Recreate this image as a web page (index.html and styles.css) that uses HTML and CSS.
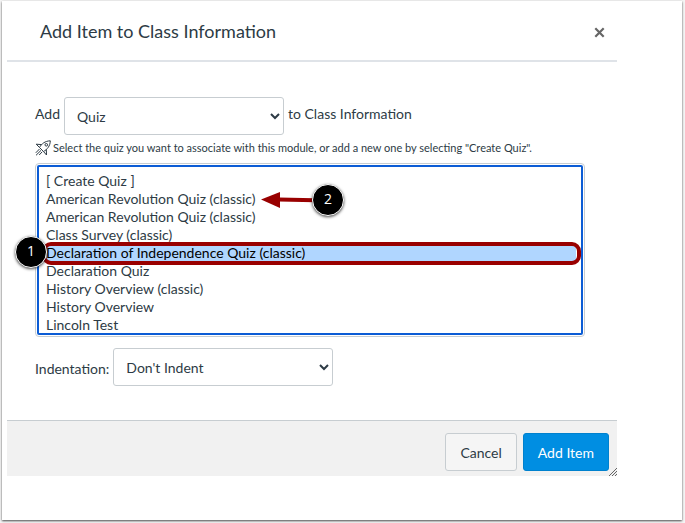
FILE: index.html
```html
<!DOCTYPE html>
<html lang="en">
<head>
<meta charset="UTF-8">
<meta name="viewport" content="width=device-width, initial-scale=1.0">
<title>Add Item to Class Information</title>

<link rel="stylesheet" href="styles.css">
</head>
<body>

<div class="page">
    <form class="dialog">

        <header class="dialog-header">
            <h1>Add Item to Class Information</h1>
            <button type="button" class="close" aria-label="Close">
                <svg width="11" height="11" viewBox="0 0 11 11">
                    <path d="M1.3 1.3L9.7 9.7M9.7 1.3L1.3 9.7" stroke="#666" stroke-width="2.2"/>
                </svg>
            </button>
        </header>

        <div class="dialog-body">

            <div class="row row-type">
                <label for="itemType" class="row-text">Add</label>
                <select id="itemType" class="dropdown">
                    <option>Assignment</option>
                    <option selected>Quiz</option>
                    <option>File</option>
                    <option>Page</option>
                </select>
                <span class="row-text">to Class Information</span>
            </div>

            <label class="hint" for="quizList">
                <svg class="rocket" width="16" height="16" viewBox="0 0 16 16">
                    <path d="M4.500 7.500C6.500 3.800 10 1 15.300 .8C15.200 6 12.200 9.500 8.500 11.500Z"/>
                    <path d="M6.500 4.600L1.200 4.200L4.500 7.500M11.300 9.500L11.500 15L8.500 11.500"/>
                    <circle cx="11.300" cy="4.800" r="1.300"/>
                    <path d="M4.500 9L.8 12.800M6 10.400L1 15.300M7.200 11.800L4.200 15"/>
                </svg>
                <span>Select the quiz you want to associate with this module, or add a new one by selecting "Create Quiz".</span>
            </label>

            <div class="list-wrap">
                <select id="quizList" class="quiz-list" size="9">
                    <option>[ Create Quiz ]</option>
                    <option>American Revolution Quiz (classic)</option>
                    <option>American Revolution Quiz (classic)</option>
                    <option>Class Survey (classic)</option>
                    <option selected>Declaration of Independence Quiz (classic)</option>
                    <option>Declaration Quiz</option>
                    <option>History Overview (classic)</option>
                    <option>History Overview</option>
                    <option>Lincoln Test</option>
                </select>

                <!-- callouts over the list -->
                <div class="highlight"></div>
                <span class="badge badge-one">1</span>
                <svg class="arrow" width="54" height="16" viewBox="0 0 54 16">
                    <path d="M0 7.500L19 0V16Z" fill="#990000"/>
                    <path d="M18 7.500L54 8.300" stroke="#990000" stroke-width="4"/>
                </svg>
                <span class="badge badge-two">2</span>
            </div>

            <div class="row row-indent">
                <label for="indent" class="row-text">Indentation:</label>
                <select id="indent" class="dropdown">
                    <option selected>Don't Indent</option>
                    <option>Indent 1 Level</option>
                    <option>Indent 2 Levels</option>
                </select>
            </div>

        </div>

        <footer class="dialog-footer">
            <button type="button" class="btn">Cancel</button>
            <button type="submit" class="btn btn-primary">Add Item</button>
            <svg class="grip" width="8" height="8" viewBox="0 0 8 8">
                <path d="M0 8L8 0M3 8L8 3M6 8L8 6" stroke="#666"/>
            </svg>
        </footer>

    </form>
</div>

</body>
</html>
```

FILE: styles.css
```css
*{
    margin:0;
    padding:0;
    box-sizing:border-box;
    font-family:Lato,"Liberation Sans",sans-serif;
}

body{
    background:#f4f4f4;
    color:#2d3b45;
    font-size:14px;
    line-height:18px;
    padding:1px 3px 3px 2px;
}

.page{
    background:white;
    min-height:calc(100vh - 4px);
    padding:0 5px;
    box-shadow:0 1px 2px rgba(0,0,0,.7);
}

.dialog{
    max-width:610px;
}

.dialog-header{
    display:flex;
    align-items:center;
    justify-content:space-between;
    padding:20px 12px 19px 33px;
    border-bottom:2px solid #dfe3e8;
}

h1{
    font-size:18px;
    font-weight:normal;
    line-height:20px;
}

.close{
    display:flex;
    padding-top:2px;
    border:none;
    background:none;
    cursor:pointer;
}

.dialog-body{
    padding:35px 32px 34px 28px;
}

.row{
    display:flex;
    gap:4px;
}

.row-text{
    padding:8px 0;
}

.row-type{
    align-items:flex-start;
}

.row-indent{
    align-items:flex-end;
}

.dropdown{
    width:220px;
    height:38px;
    padding:0 8px;
    border:1px solid #c7cdd1;
    border-radius:3px;
    background:white;
    color:#2d3b45;
    font-size:14px;
}

.hint{
    display:flex;
    align-items:center;
    gap:2px;
    margin:4px 0 6px;
    font-size:11px;
}

.rocket{
    fill:none;
    stroke:#2d3b45;
    stroke-width:1;
}

.list-wrap{
    position:relative;
    margin-bottom:11px;
}

.quiz-list{
    display:block;
    width:100%;
    padding:8px 8px 2px;
    border:1px solid #c7cdd1;
    border-radius:4px;
    outline:2px solid #0b5cd5;
    outline-offset:-4px;
    background:white;
    color:#2d3b45;
    font-size:14px;
    overflow:hidden;
}

.quiz-list option{
    height:18px;
    min-height:18px;
    padding:0 2px;
    line-height:18px;
}

.quiz-list option:checked{
    background:#b0d6ff linear-gradient(#b0d6ff,#b0d6ff);
    color:black;
}

.highlight{
    position:absolute;
    top:79px;
    left:7px;
    right:4px;
    height:23px;
    border:4px solid #990000;
    border-radius:9px;
}

.badge{
    position:absolute;
    width:32px;
    height:32px;
    border:1px solid white;
    border-radius:50%;
    background:black;
    color:white;
    font-family:"Open Sans",sans-serif;
    font-size:14px;
    line-height:28px;
    text-align:center;
    box-shadow:0 1px 3px rgba(0,0,0,.7);
}

.badge-one{
    top:73px;
    left:-20px;
}

.badge-two{
    top:21px;
    left:277px;
}

.arrow{
    position:absolute;
    top:29px;
    left:226px;
}

.dialog-footer{
    position:relative;
    display:flex;
    justify-content:flex-end;
    gap:6px;
    padding:12px 8px 5px;
    border-top:1px solid #c7cdd1;
    background:#f1f1f1;
}

.btn{
    height:38px;
    padding:0 14px;
    border:1px solid #c7cdd1;
    border-radius:3px;
    background:#f5f5f5;
    color:#2d3b45;
    font-size:14px;
    cursor:pointer;
}

.btn-primary{
    background:#008ee2;
    border-color:#0081ce;
    color:white;
}

.grip{
    position:absolute;
    right:0;
    bottom:0;
}
```
